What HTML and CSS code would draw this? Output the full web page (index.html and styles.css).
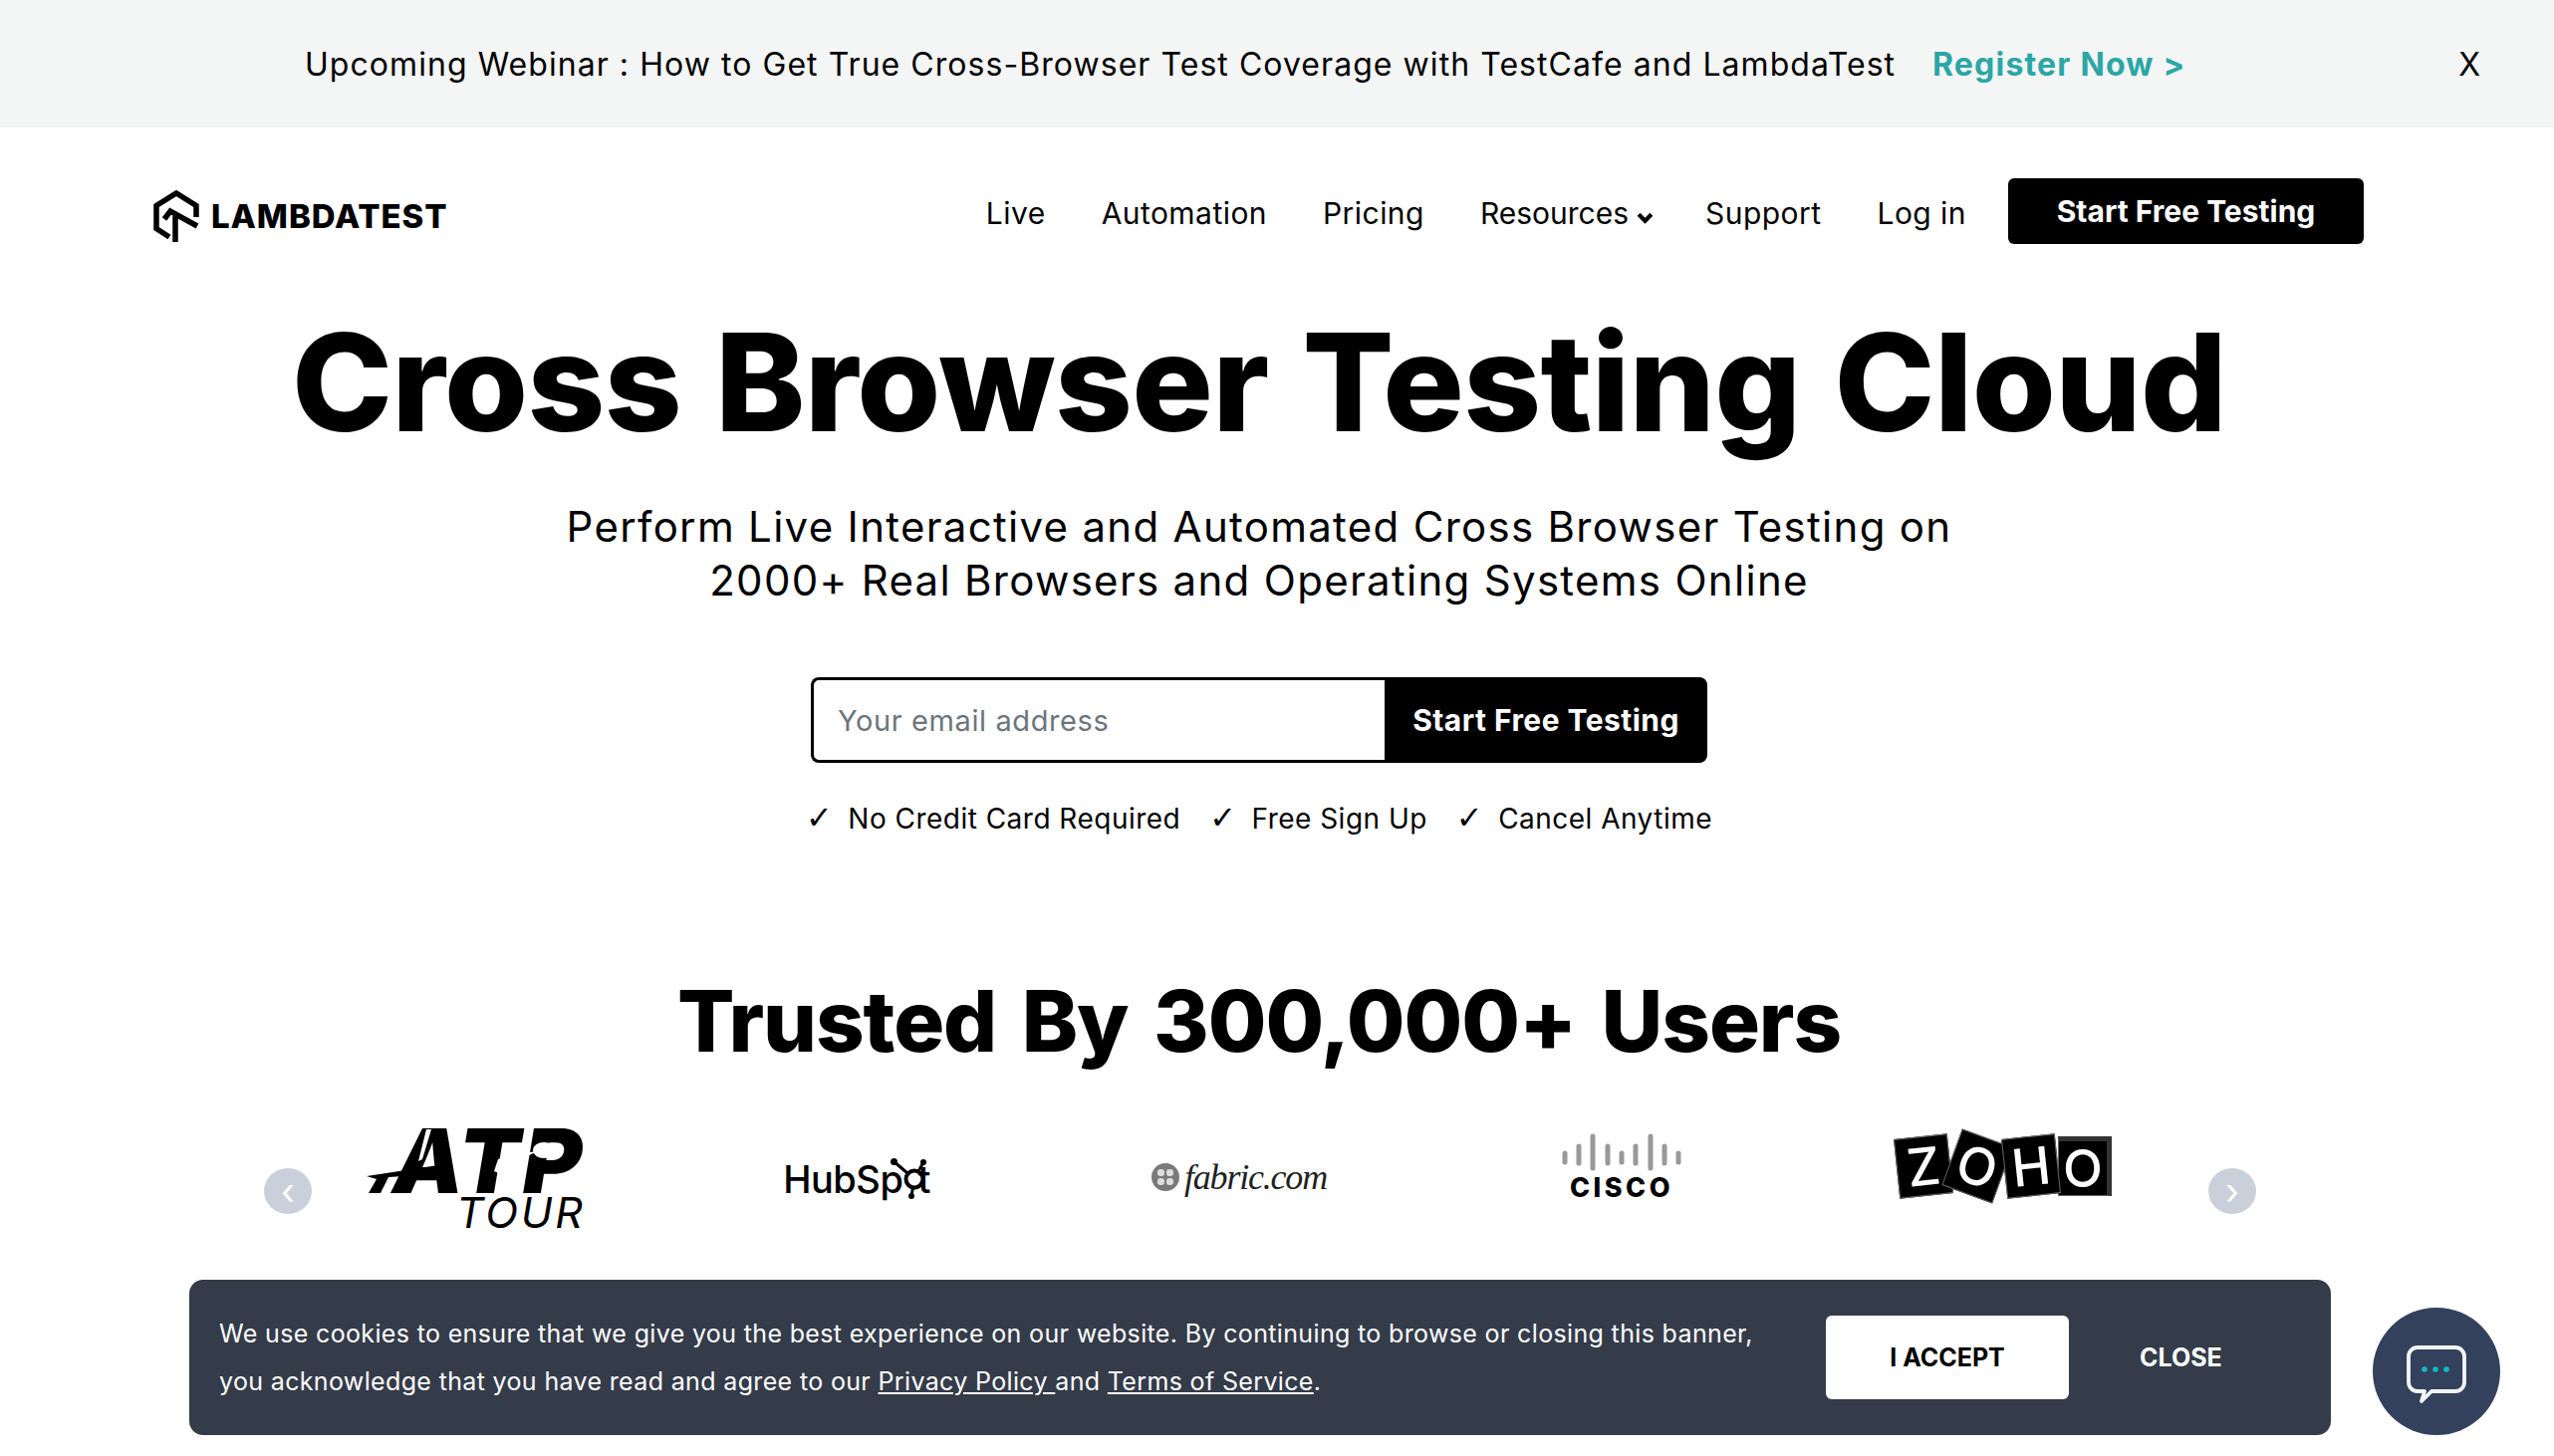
FILE: index.html
```html
<!DOCTYPE html>
<html>
	<head>
		<title>Cross Browser Testing Cloud</title>
		<link rel="stylesheet" href="styles.css">
	</head>
	<body>
		<div class="banner">
			<span class="banner-text">Upcoming Webinar : How to Get True Cross-Browser Test Coverage with TestCafe and LambdaTest</span>
			<a class="banner-link">Register Now &gt;</a>
			<span class="banner-x">X</span>
		</div>
		<header class="header">
			<div class="brand">
				<svg class="brand-mark" viewBox="0 0 46 52" width="46" height="52">
					<path d="M16 47 L3 38.500 V15.500 L23 3 L43 15.500 V27" fill="none" stroke="#000" stroke-width="5.500"/>
					<path d="M11 29 L17 21 L44 36 M22 26 V52" fill="none" stroke="#000" stroke-width="5.500"/>
				</svg>
				<span class="brand-name">LAMBDATEST</span>
			</div>
			<nav class="nav">
				<a>Live</a>
				<a>Automation</a>
				<a>Pricing</a>
				<a class="nav-drop">Resources<svg viewBox="0 0 16 12" width="17" height="13"><path d="M2 3 L8 9 L14 3" fill="none" stroke="#000" stroke-width="4"/></svg></a>
				<a>Support</a>
				<a>Log in</a>
			</nav>
			<button class="btn-top">Start Free Testing</button>
		</header>
		<section class="hero">
			<h1>Cross Browser Testing Cloud</h1>
			<p class="lead">Perform Live Interactive and Automated Cross Browser Testing on<br>2000+ Real Browsers and Operating Systems Online</p>
			<form class="signup">
				<input class="signup-input" type="text" placeholder="Your email address">
				<button class="signup-btn" type="button">Start Free Testing</button>
			</form>
			<ul class="checks">
				<li><span class="tick">&#10003;</span>No Credit Card Required</li>
				<li><span class="tick">&#10003;</span>Free Sign Up</li>
				<li><span class="tick">&#10003;</span>Cancel Anytime</li>
			</ul>
		</section>
		<section class="trusted">
			<h2>Trusted By 300,000+ Users</h2>
			<div class="logos">
				<span class="arrow arrow-prev">&#8249;</span>
				<div class="logo logo-atp">
					<svg viewBox="0 0 217 100" width="217" height="100">
						<text class="atp-big" x="26" y="64" textLength="190" lengthAdjust="spacing">ATP</text>
						<path d="M0 47 L72 36 L68 45 L22 48 L14 64 H2 L10 50 Z"/>
						<path d="M60 0 L52 32 L56 30 L65 0 Z" fill="#fff"/>
						<path d="M132 30 L142 27 L146 21 L154 24 L172 22 L152 31 L150 42 L142 54 L134 60 L137 46 L128 42 Z" fill="#fff"/>
						<ellipse cx="178" cy="21" rx="11" ry="8" fill="#fff"/>
						<text class="atp-small" x="90" y="99" textLength="127" lengthAdjust="spacing">TOUR</text>
					</svg>
				</div>
				<div class="logo logo-hub">
					<span>HubSp</span><svg class="hub-o" viewBox="0 0 36 42" width="36" height="42">
						<path d="M3 3 L24 21 M33 4 L24 21 M21 38 L24 21" stroke="#000" stroke-width="3"/>
						<circle cx="3.500" cy="3.500" r="3.500"/><circle cx="33" cy="4" r="3"/><circle cx="21" cy="38" r="3"/>
						<circle cx="24" cy="21" r="8.500" fill="#fff" stroke="#000" stroke-width="4"/>
					</svg><span>t</span>
				</div>
				<div class="logo logo-fabric">
					<svg viewBox="0 0 28 28" width="28" height="28">
						<circle cx="14" cy="14" r="14" fill="#7a7a7a"/>
						<rect x="6" y="6" width="7" height="7" rx="3" fill="#ddd"/>
						<rect x="15" y="6" width="7" height="7" rx="3" fill="#ddd"/>
						<rect x="6" y="15" width="7" height="7" rx="3" fill="#ddd"/>
						<rect x="15" y="15" width="7" height="7" rx="3" fill="#ddd"/>
					</svg>
					<span>fabric.com</span>
				</div>
				<div class="logo logo-cisco">
					<svg viewBox="0 0 120 34" width="120" height="34">
						<path d="M3 18 V27 M17 11 V28 M31 1 V33 M46 11 V28 M60 18 V27 M74 11 V28 M89 1 V33 M103 11 V28 M117 18 V27" stroke="#999" stroke-width="5" stroke-linecap="round"/>
					</svg>
					<span>CISCO</span>
				</div>
				<div class="logo logo-zoho">
					<span class="zoho-z">Z</span><span class="zoho-o1">O</span><span class="zoho-h">H</span><span class="zoho-o2">O</span>
				</div>
				<span class="arrow arrow-next">&#8250;</span>
			</div>
		</section>
		<div class="cookie">
			<p>We use cookies to ensure that we give you the best experience on our website. By continuing to browse or closing this banner,<br>you acknowledge that you have read and agree to our <a>Privacy Policy </a>and <a>Terms of Service</a>.</p>
			<button class="cookie-accept">I ACCEPT</button>
			<button class="cookie-close">CLOSE</button>
		</div>
		<div class="chat">
			<svg viewBox="0 0 60 58" width="60" height="58">
				<path d="M11 2 H49 A9 9 0 0 1 58 11 V37 A9 9 0 0 1 49 46 H25 L15 56 L18 46 H11 A9 9 0 0 1 2 37 V11 A9 9 0 0 1 11 2 Z" fill="none" stroke="#f2f4f6" stroke-width="3.800" stroke-linejoin="round"/>
				<circle cx="18" cy="24" r="2.800" fill="#14b8c4"/><circle cx="29" cy="24" r="2.800" fill="#14b8c4"/><circle cx="40" cy="24" r="2.800" fill="#14b8c4"/>
			</svg>
		</div>
	</body>
</html>
```

FILE: styles.css
```css
body
{
	margin: 0;
	background-color: #fff;
	color: #000;
	font-family: Inter, "Open Sans", sans-serif;
	overflow: hidden;
}
a
{
	color: inherit;
}
button
{
	font-family: inherit;
	border: 0;
	cursor: pointer;
}

/* top banner */
.banner
{
	display: flex;
	align-items: center;
	height: 128px;
	padding-left: 306px;
	background-color: #f4f5f5;
	font-size: 32px;
}
.banner-text
{
	width: 1596px;
	white-space: nowrap;
	letter-spacing: 1.05px;
}
.banner-link
{
	margin-left: 38px;
	color: #2ba6a6;
	font-weight: 700;
	white-space: nowrap;
	letter-spacing: 1.2px;
}
.banner-x
{
	margin-left: auto;
	margin-right: 74px;
}

/* header */
.header
{
	display: flex;
	align-items: center;
	height: 168px;
	padding: 0 191px 0 154px;
}
.brand
{
	display: flex;
	align-items: center;
	gap: 12px;
	margin-top: 10px;
}
.brand-name
{
	font-size: 33px;
	font-weight: 800;
	letter-spacing: 0.9px;
}
.nav
{
	display: flex;
	gap: 56px;
	margin-top: 4px;
	margin-left: auto;
	font-size: 30px;
	letter-spacing: 0.45px;
}
.nav-drop
{
	margin-right: -4px;
	letter-spacing: 0;
}
.nav-drop svg
{
	margin-left: 8px;
}
.btn-top
{
	width: 357px;
	height: 66px;
	margin-left: 42px;
	border-radius: 6px;
	background-color: #000;
	color: #fff;
	font-size: 30px;
	font-weight: 700;
}

/* hero */
.hero
{
	width: 2528px;
	text-align: center;
}
h1
{
	margin: 0;
	padding-top: 8px;
	font-size: 136px;
	line-height: 160px;
	font-weight: 800;
	letter-spacing: -0.7px;
	word-spacing: 5px;
}
.lead
{
	margin: 38px 0 0;
	font-size: 42px;
	line-height: 54px;
	letter-spacing: 1.3px;
}
.signup
{
	display: flex;
	width: 900px;
	height: 86px;
	margin: 70px auto 0;
}
.signup-input
{
	box-sizing: border-box;
	width: 576px;
	height: 86px;
	padding: 0 24px;
	border: 3px solid #000;
	border-right: 0;
	border-radius: 8px 0 0 8px;
	font-family: inherit;
	font-size: 29px;
	letter-spacing: 0.6px;
	outline: none;
}
.signup-input::placeholder
{
	color: #6c757d;
	opacity: 1;
}
.signup-btn
{
	width: 324px;
	height: 86px;
	border-radius: 0 8px 8px 0;
	background-color: #000;
	color: #fff;
	font-size: 30px;
	font-weight: 700;
	letter-spacing: 0.45px;
}
.checks
{
	display: flex;
	justify-content: center;
	gap: 29px;
	margin: 39px 0 0;
	padding: 0;
	list-style: none;
	font-size: 28px;
	letter-spacing: 0.48px;
}
.tick
{
	margin-right: 15px;
	font-family: "DejaVu Sans", sans-serif;
	font-size: 32px;
	line-height: 28px;
}

/* trusted by */
.trusted
{
	width: 2528px;
	margin-top: 137px;
}
h2
{
	margin: 0;
	text-align: center;
	font-size: 85px;
	line-height: 100px;
	font-weight: 800;
	letter-spacing: -1.1px;
	word-spacing: 8px;
}
.logos
{
	position: relative;
	display: flex;
	align-items: center;
	width: 1920px;
	height: 120px;
	margin: 49px 0 0 284px;
}
.arrow
{
	position: absolute;
	top: 48px;
	display: flex;
	align-items: center;
	justify-content: center;
	width: 48px;
	height: 46px;
	border-radius: 50%;
	background-color: #c9d0d9;
	color: #fff;
	font-size: 36px;
	line-height: 1;
}
.arrow-prev
{
	left: -19px;
}
.arrow-next
{
	left: 1933px;
}
.logo
{
	display: flex;
	align-items: center;
	justify-content: center;
	flex: 0 0 384px;
	white-space: nowrap;
}
.logo svg
{
	overflow: visible;
}
.logo-atp
{
	margin-bottom: 3px;
}
.atp-big
{
	font-size: 90px;
	font-weight: 900;
	font-style: italic;
}
.atp-small
{
	font-size: 43px;
	font-style: italic;
	font-weight: 400;
}
.logo-hub
{
	margin-bottom: 3px;
	font-size: 38px;
	font-weight: 500;
	letter-spacing: -0.5px;
}
.hub-o
{
	margin: 0 -9px 0 -12px;
}
.logo-fabric
{
	gap: 5px;
	margin-bottom: 6px;
	color: #222;
	font-family: "Liberation Serif", serif;
	font-size: 36px;
	font-style: italic;
	letter-spacing: -1.2px;
}
.logo-cisco
{
	flex-direction: column;
	gap: 8px;
	margin-bottom: 27px;
	font-size: 27px;
	line-height: 22px;
	font-weight: 800;
	letter-spacing: 3.5px;
}
.logo-zoho
{
	margin-bottom: 28px;
	color: #fff;
	font-size: 52px;
	font-weight: 500;
}
.logo-zoho span
{
	display: flex;
	align-items: center;
	justify-content: center;
	box-sizing: border-box;
	width: 54px;
	height: 60px;
	border: 1px solid #666;
	background-color: #000;
}
.zoho-z
{
	transform: rotate(-6deg);
}
.zoho-o1
{
	transform: rotate(20deg);
}
.zoho-h
{
	transform: rotate(-6deg);
}
.logo-zoho .zoho-o2
{
	border-top: 5px solid #333;
	border-right: 5px solid #333;
}

/* cookie bar */
.cookie
{
	position: fixed;
	left: 190px;
	top: 1285px;
	display: flex;
	align-items: center;
	box-sizing: border-box;
	width: 2150px;
	height: 156px;
	padding-left: 30px;
	border-radius: 14px;
	background-color: #343b49;
	color: #fff;
}
.cookie p
{
	width: 1613px;
	margin: 0;
	font-size: 25px;
	line-height: 48px;
	white-space: nowrap;
	letter-spacing: 0.35px;
}
.cookie p a
{
	text-decoration: underline;
}
.cookie-accept
{
	width: 244px;
	height: 84px;
	border-radius: 6px;
	background-color: #fff;
	color: #000;
	font-size: 25px;
	font-weight: 700;
}
.cookie-close
{
	margin-left: 65px;
	background: none;
	color: #fff;
	font-size: 25px;
	font-weight: 700;
}

/* chat bubble */
.chat
{
	position: fixed;
	left: 2382px;
	top: 1313px;
	display: flex;
	align-items: center;
	justify-content: center;
	width: 128px;
	height: 128px;
	border-radius: 50%;
	background-color: #33415c;
}
.chat svg
{
	margin-top: 6px;
}
```
